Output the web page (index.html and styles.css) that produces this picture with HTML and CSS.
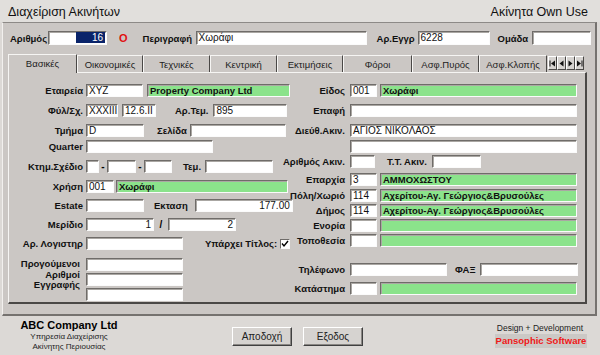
FILE: index.html
```html
<!DOCTYPE html>
<html lang="el">
<head>
  <meta charset="UTF-8" />
  <title>Διαχείριση Ακινήτων</title>
  <link rel="stylesheet" href="styles.css">
</head>
<body>
  <div class="titlebar">
    <span>Διαχείριση Ακινήτων</span>
    <span>Ακίνητα Own Use</span>
  </div>

  <div class="frame">
    <div class="head-row">
      <span class="lbl w33">Αριθμός</span>
      <div class="fld w59 code-fld"><span class="sel">16</span></div>
      <span class="status">O</span>
      <span class="lbl w50 ml15">Περιγραφή</span>
      <div class="fld w171 ml3">Χωράφι</div>
      <span class="lbl w38 ml10">Αρ.Εγγρ</span>
      <div class="fld w72 ml3">6228</div>
      <span class="lbl w30 ml8">Ομάδα</span>
      <div class="fld w59 ml4"></div>
    </div>

    <div class="tab-wrap">
      <div class="tabs">
        <div class="tab active t69">Βασικές</div>
        <div class="tab t66">Οικονομικές</div>
        <div class="tab t67">Τεχνικές</div>
        <div class="tab t67">Κεντρική</div>
        <div class="tab t66">Εκτιμήσεις</div>
        <div class="tab t69">Φόροι</div>
        <div class="tab t67">Ασφ.Πυρός</div>
        <div class="tab t68">Ασφ.Κλοπής</div>
        <div class="nav">
          <div class="nav-btn"><svg width="7" height="7" viewBox="0 0 7 7"><rect x="0.5" y="0.5" width="1" height="6"/><polygon points="6,0.5 6,6.5 2,3.5"/></svg></div>
          <div class="nav-btn"><svg width="7" height="7" viewBox="0 0 7 7"><polygon points="5.5,0.5 5.5,6.5 1.5,3.5"/></svg></div>
          <div class="nav-btn"><svg width="7" height="7" viewBox="0 0 7 7"><polygon points="1.5,0.5 1.5,6.5 5.5,3.5"/></svg></div>
          <div class="nav-btn"><svg width="7" height="7" viewBox="0 0 7 7"><polygon points="1,0.5 1,6.5 5,3.5"/><rect x="5.5" y="0.5" width="1" height="6"/></svg></div>
        </div>
      </div>

      <div class="panel">
        <div class="col col-left">
          <div class="row">
            <span class="lbl cap">Εταιρεία</span>
            <div class="fld w57">XYZ</div>
            <div class="fld green w143 ml4">Property Company Ltd</div>
          </div>
          <div class="row mt7">
            <span class="lbl cap">Φύλ/Σχ.</span>
            <div class="fld w32">XXXIII</div>
            <div class="fld w34 ml4">12.6.II</div>
            <span class="lbl ml19">Αρ.Τεμ.</span>
            <div class="fld w74 ml5">895</div>
          </div>
          <div class="row mt7">
            <span class="lbl cap">Τμήμα</span>
            <div class="fld w58">D</div>
            <span class="lbl ml13">Σελίδα</span>
            <div class="fld w96 ml3"></div>
          </div>
          <div class="row mt3">
            <span class="lbl cap">Quarter</span>
            <div class="fld w127"></div>
          </div>
          <div class="row mt7">
            <span class="lbl cap">Κτημ.Σχέδιο</span>
            <div class="fld w13"></div>
            <span class="dash">-</span>
            <div class="fld w29"></div>
            <span class="dash">-</span>
            <div class="fld w28"></div>
            <span class="lbl ml11">Τεμ.</span>
            <div class="fld w68 ml4"></div>
          </div>
          <div class="row mt7">
            <span class="lbl cap">Χρήση</span>
            <div class="fld w28">001</div>
            <div class="fld green w172 ml2">Χωράφι</div>
          </div>
          <div class="row mt6">
            <span class="lbl cap">Estate</span>
            <div class="fld w58"></div>
            <span class="lbl ml10">Εκταση</span>
            <div class="fld num w98 ml7">177.00</div>
          </div>
          <div class="row mt6">
            <span class="lbl cap">Μερίδιο</span>
            <div class="fld num w68">1</div>
            <span class="slash">/</span>
            <div class="fld num w68">2</div>
          </div>
          <div class="row mt6">
            <span class="lbl cap">Αρ. Λογιστηρ</span>
            <div class="fld w97"></div>
            <span class="lbl ml22">Υπάρχει Τίτλος:</span>
            <div class="chk ml3"><svg width="8" height="8" viewBox="0 0 8 8"><polyline points="1,3.5 3,6 7,1" fill="none" stroke="#000" stroke-width="1.4"/></svg></div>
          </div>
          <div class="multi">
            <div class="lbl multi-lbl">Προγούμενοι<br>Αριθμοί<br>Εγγραφής</div>
            <div class="stack">
              <div class="fld w97"></div>
              <div class="fld w97"></div>
              <div class="fld w97"></div>
            </div>
          </div>
        </div>

        <div class="col col-right">
          <div class="row">
            <span class="lbl cap">Είδος</span>
            <div class="fld w27">001</div>
            <div class="fld green w197 ml3">Χωράφι</div>
          </div>
          <div class="row mt7">
            <span class="lbl cap">Επαφή</span>
            <div class="fld w227"></div>
          </div>
          <div class="row mt7">
            <span class="lbl cap">Διεύθ.Ακιν.</span>
            <div class="fld w227">ΑΓΙΟΣ ΝΙΚΟΛΑΟΣ</div>
          </div>
          <div class="row mt3">
            <span class="lbl cap"></span>
            <div class="fld w227"></div>
          </div>
          <div class="row mt2">
            <span class="lbl cap">Αριθμός Ακιν.</span>
            <div class="fld w25"></div>
            <span class="lbl ml12">Τ.Τ. Ακιν.</span>
            <div class="fld w49 ml5"></div>
          </div>
          <div class="row mt5">
            <span class="lbl cap">Επαρχία</span>
            <div class="fld w27">3</div>
            <div class="fld green w197 ml3">ΑΜΜΟΧΩΣΤΟΥ</div>
          </div>
          <div class="row mt3">
            <span class="lbl cap">Πόλη/Χωριό</span>
            <div class="fld w27">114</div>
            <div class="fld green w197 ml3">Αχερίτου-Αγ. Γεώργιος&amp;Βρυσούλες</div>
          </div>
          <div class="row mt2">
            <span class="lbl cap">Δήμος</span>
            <div class="fld w27">114</div>
            <div class="fld green w197 ml3">Αχερίτου-Αγ. Γεώργιος&amp;Βρυσούλες</div>
          </div>
          <div class="row mt2">
            <span class="lbl cap">Ενορία</span>
            <div class="fld w27"></div>
            <div class="fld green w197 ml3"></div>
          </div>
          <div class="row mt2">
            <span class="lbl cap">Τοποθεσία</span>
            <div class="fld w27"></div>
            <div class="fld green w197 ml3"></div>
          </div>
          <div class="row mt16">
            <span class="lbl cap">Τηλέφωνο</span>
            <div class="fld w97"></div>
            <span class="lbl ml8">ΦΑΞ</span>
            <div class="fld w98 ml4"></div>
          </div>
          <div class="row mt6">
            <span class="lbl cap">Κατάστημα</span>
            <div class="fld w27"></div>
            <div class="fld green w197 ml3"></div>
          </div>
        </div>
      </div>
    </div>
  </div>

  <div class="footer">
    <div class="company">
      <div class="company-name">ABC Company Ltd</div>
      <div class="company-sub">Υπηρεσία Διαχείρισης</div>
      <div class="company-sub">Ακίνητης Περιουσίας</div>
    </div>
    <div class="actions">
      <button class="btn">Αποδοχή</button>
      <button class="btn">Εξοδος</button>
    </div>
    <div class="credits">
      <div class="credits-top">Design + Development</div>
      <div class="credits-name">Pansophic Software</div>
    </div>
  </div>
</body>
</html>
```

FILE: styles.css
```css
* {
  box-sizing: border-box;
}

body {
  margin: 0;
  width: 600px;
  height: 355px;
  overflow: hidden;
  background: #dcd9d6;
  font-family: "Liberation Sans", Arial, sans-serif;
  font-size: 10px;
  color: #000;
}

.titlebar {
  height: 22px;
  display: flex;
  justify-content: space-between;
  align-items: center;
  padding: 1px 12px 0 8px;
  font-size: 12.5px;
  background: #e1dfdc;
  color: #111;
}

.frame {
  margin: 0 3px 0 2px;
  height: 294px;
  background: #cbc7c4;
  border-top: 1px solid #8d8a87;
  border-left: 1px solid #f2f0ee;
  border-right: 2px solid #75726f;
  border-bottom: 2px solid #75726f;
  padding-top: 8px;
}

.head-row {
  display: flex;
  align-items: center;
  height: 14px;
  padding-left: 7px;
}

.lbl {
  font-weight: bold;
  white-space: nowrap;
  font-size: 9.5px;
  color: #111;
}

.status {
  color: #e01010;
  font-weight: bold;
  font-size: 11px;
  margin-left: 12px;
}

/* fields */
.fld {
  height: 13px;
  flex: none;
  background: #fff;
  border: 1px solid;
  border-color: #6f6c69 #fbfbfb #fbfbfb #6f6c69;
  box-shadow: inset 1px 1px 0 #aaa7a3;
  padding: 0 2px;
  line-height: 11px;
  font-size: 10px;
  white-space: nowrap;
  overflow: hidden;
  color: #111;
}

.head-row .fld {
  height: 14px;
  line-height: 12px;
}

.fld.green {
  background: #8be38b;
  font-weight: bold;
  font-size: 9.5px;
}

.fld.num {
  text-align: right;
}

.code-fld {
  margin-left: 5px;
  text-align: right;
  padding: 0 1px;
}

.code-fld .sel {
  display: inline-block;
  width: 29px;
  background: #0a246a;
  color: #fff;
  text-align: right;
  padding-right: 2px;
  height: 11px;
  vertical-align: top;
}

/* tabs */
.tab-wrap {
  margin: 7px 0 0 5px;
  width: 579px;
}

.tabs {
  display: flex;
  align-items: flex-end;
  height: 20px;
}

.tab {
  height: 17px;
  display: flex;
  align-items: center;
  justify-content: center;
  font-size: 9.5px;
  color: #222;
  border-top: 1px solid #f6f5f3;
  border-left: 1px solid #f6f5f3;
  border-right: 1px solid #4a4846;
}

.tab.active {
  height: 19px;
  padding-bottom: 2px;
  position: relative;
  margin-bottom: -1px;
  background: #cbc7c4;
}

.t66 { width: 66px; }
.t67 { width: 67px; }
.t68 { width: 68px; }
.t69 { width: 69px; }

.nav {
  display: flex;
  margin-left: 1px;
  margin-bottom: 2px;
}

.nav-btn {
  width: 9px;
  height: 14px;
  display: flex;
  align-items: center;
  justify-content: center;
  border-top: 1px solid #fff;
  border-left: 1px solid #fff;
  border-right: 1px solid #4a4846;
  border-bottom: 1px solid #4a4846;
  background: #d6d3d0;
}

.nav-btn svg {
  fill: #111;
}

.panel {
  height: 232px;
  display: flex;
  padding-top: 11px;
  border-top: 1px solid #f6f5f3;
  border-left: 1px solid #f6f5f3;
  border-right: 2px solid #4a4846;
  border-bottom: 2px solid #4a4846;
}

.col-left {
  width: 283px;
}

.col-right {
  flex: 1;
}

.row {
  display: flex;
  align-items: center;
  height: 13px;
}

.lbl.cap {
  display: flex;
  justify-content: flex-end;
  flex: none;
}

.col-left .cap {
  width: 74px;
  margin-right: 3px;
}

.col-right .cap {
  width: 53px;
  margin-right: 5px;
}

.dash {
  width: 8px;
  text-align: center;
  font-weight: bold;
}

.slash {
  width: 14px;
  text-align: center;
  font-weight: bold;
}

.chk {
  width: 10px;
  height: 10px;
  background: #fff;
  border: 1px solid;
  border-color: #6f6c69 #fbfbfb #fbfbfb #6f6c69;
  display: flex;
  align-items: center;
  justify-content: center;
}

.multi {
  display: flex;
  margin-top: 8px;
}

.multi-lbl {
  width: 74px;
  margin-right: 3px;
  text-align: right;
  padding: 1px 3px 0 0;
  line-height: 10.5px;
}

.stack {
  display: flex;
  flex-direction: column;
  gap: 2px;
}

/* spacing helpers */
.mt2 { margin-top: 2px; }
.mt3 { margin-top: 3px; }
.mt5 { margin-top: 5px; }
.mt6 { margin-top: 6px; }
.mt7 { margin-top: 7px; }
.mt16 { margin-top: 16px; }

.ml2 { margin-left: 2px; }
.ml3 { margin-left: 3px; }
.ml4 { margin-left: 4px; }
.ml5 { margin-left: 5px; }
.ml7 { margin-left: 7px; }
.ml8 { margin-left: 8px; }
.ml10 { margin-left: 10px; }
.ml11 { margin-left: 11px; }
.ml12 { margin-left: 12px; }
.ml13 { margin-left: 13px; }
.ml15 { margin-left: 15px; }
.ml19 { margin-left: 19px; }
.ml22 { margin-left: 22px; }

.w13 { width: 13px; }
.w25 { width: 25px; }
.w27 { width: 27px; }
.w28 { width: 28px; }
.w29 { width: 29px; }
.w30 { width: 30px; }
.w32 { width: 32px; }
.w33 { width: 33px; }
.w34 { width: 34px; }
.w38 { width: 38px; }
.w49 { width: 49px; }
.w50 { width: 50px; }
.w57 { width: 57px; }
.w58 { width: 58px; }
.w59 { width: 59px; }
.w68 { width: 68px; }
.w72 { width: 72px; }
.w74 { width: 74px; }
.w96 { width: 96px; }
.w97 { width: 97px; }
.w98 { width: 98px; }
.w127 { width: 127px; }
.w143 { width: 143px; }
.w171 { width: 171px; }
.w172 { width: 172px; }
.w197 { width: 197px; }
.w227 { width: 227px; }

/* footer */
.footer {
  height: 39px;
  display: flex;
  align-items: flex-start;
}

.company {
  width: 98px;
  margin: 3px 0 0 20px;
  display: flex;
  flex-direction: column;
  align-items: center;
  white-space: nowrap;
}

.company-name {
  font-weight: bold;
  font-size: 11px;
  line-height: 13px;
}

.company-sub {
  font-size: 8px;
  line-height: 10px;
  color: #222;
}

.actions {
  display: flex;
  gap: 11px;
  margin: 11px 0 0 114px;
}

.btn {
  width: 60px;
  height: 19px;
  padding: 0;
  font-family: "Liberation Sans", Arial, sans-serif;
  font-size: 10px;
  color: #222;
  background: #d6d3d0;
  border: 1px solid;
  border-color: #fff #404040 #404040 #fff;
  box-shadow: inset -1px -1px 0 #8a8784;
}

.credits {
  margin: 7px 0 0 132px;
  width: 92px;
  display: flex;
  flex-direction: column;
  align-items: flex-end;
  white-space: nowrap;
}

.credits-top {
  font-size: 8.5px;
  line-height: 10px;
  padding-right: 4px;
  color: #222;
}

.credits-name {
  margin-top: 1px;
  width: 92px;
  height: 14px;
  line-height: 13px;
  background: #cbc8c5;
  color: #f01818;
  font-weight: bold;
  font-size: 9.5px;
  text-align: center;
}
```
